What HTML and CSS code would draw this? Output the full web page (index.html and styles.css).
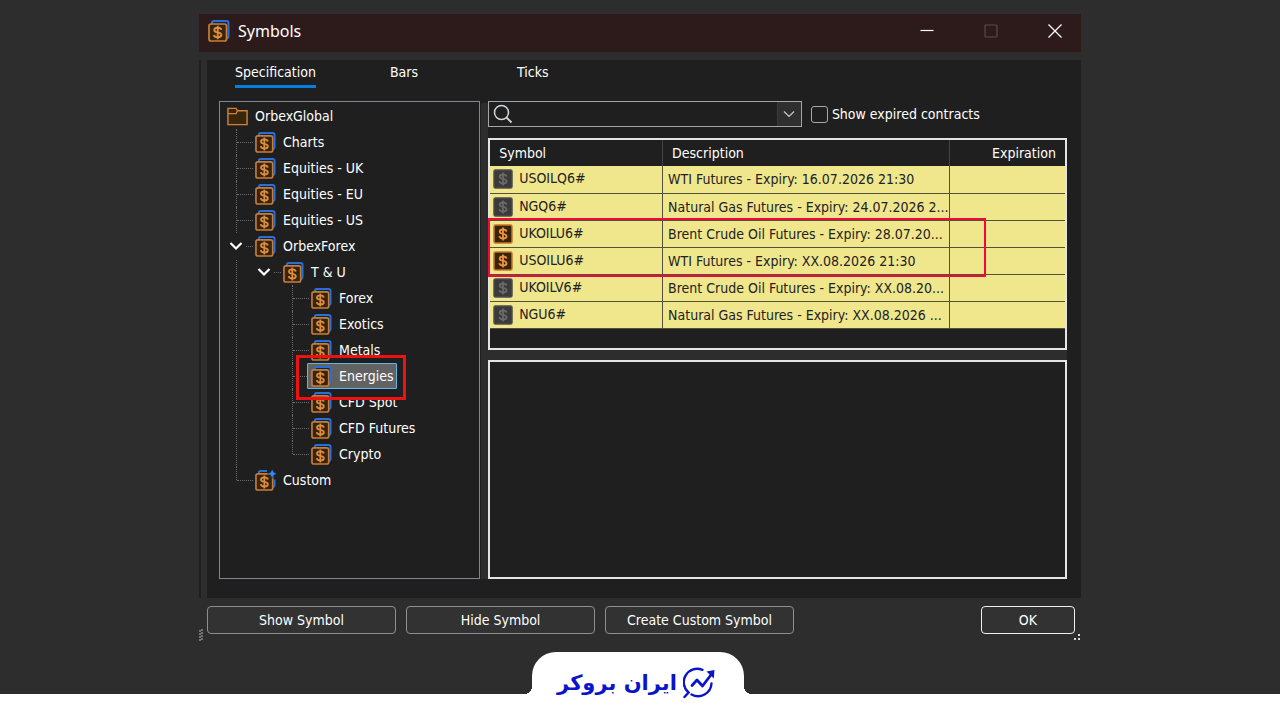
FILE: index.html
```
<!DOCTYPE html>
<html lang="en">
<head>
<meta charset="utf-8">
<title>Symbols</title>
<link rel="stylesheet" href="styles.css">
</head>
<body>
<svg class="defs" aria-hidden="true">
  <symbol id="dollar" viewBox="0 0 10 14">
    <path d="M5 .5v13M8.400 4.600C8.200 3.200 6.900 2.500 5 2.500S1.700 3.300 1.700 4.800C1.700 7.900 8.500 6 8.500 9.200C8.500 10.700 7.100 11.500 5 11.500S1.600 10.700 1.400 9.200" fill="none" stroke="currentColor" stroke-width="1.800"/>
  </symbol>
  <symbol id="stack" viewBox="0 0 22 22">
    <path d="M4 4.500V3Q4 1 6 1H18.500Q20.500 1 20.500 3V16Q20.500 18 18.500 18.500" fill="#0c2647" stroke="#2a6fd6" stroke-width="2"/>
    <rect x="1" y="4" width="17.500" height="17" rx="2" fill="#38240a" stroke="#c87d38" stroke-width="1.700"/>
    <use href="#dollar" x="4.500" y="5" width="10.500" height="15" color="#de8c40"/>
  </symbol>
  <symbol id="stack-plus" viewBox="0 0 22 22">
    <path d="M4 4V3Q4 1 6 1H12.500M20.500 10V16Q20.500 18 18.500 18.500" fill="none" stroke="#2a6fd6" stroke-width="2"/>
    <rect x="1" y="4" width="17.500" height="17" rx="2" fill="#38240a" stroke="#c87d38" stroke-width="1.700"/>
    <path d="M18 -1l1.600 3.400L23 4l-3.400 1.600L18 9l-1.600-3.400L13 4l3.400-1.600z" fill="#2f86ff" stroke="#1f1f1f" stroke-width=".5"/>
    <use href="#dollar" x="4.500" y="5" width="10.500" height="15" color="#de8c40"/>
  </symbol>
  <symbol id="folder" viewBox="0 0 22 20">
    <path d="M1 1.500H9.500L11 4H21V18.500H1zM1 7H9.500L11 4" fill="#3a260a" stroke="#cf8238" stroke-width="1.500"/>
  </symbol>
  <symbol id="tile" viewBox="0 0 20 20">
    <rect x="1" y="1" width="18" height="18" rx="1.500" fill="var(--tile)" stroke="var(--edge)" stroke-width="1.500"/>
    <use href="#dollar" x="5" y="3" width="10" height="14"/>
  </symbol>
  <symbol id="chevron" viewBox="0 0 14 10">
    <path d="M1.500 2L7 7.500L12.500 2" fill="none" stroke="currentColor" stroke-width="2.200"/>
  </symbol>
</svg>

<main class="window">
  <header class="titlebar">
    <svg class="app-icon"><use href="#stack"/></svg>
    <h1>Symbols</h1>
    <div class="window-buttons">
      <button aria-label="Minimize"><svg viewBox="0 0 16 16"><path d="M1.500 7.500H14.500" stroke="#fff" stroke-width="1.200"/></svg></button>
      <button aria-label="Maximize" disabled><svg viewBox="0 0 16 16"><rect x="2" y="2" width="12" height="12" rx="1" fill="none" stroke="#5b4a4a" stroke-width="1.200"/></svg></button>
      <button aria-label="Close"><svg viewBox="0 0 16 16"><path d="M1.500 1.500L14.500 14.500M14.500 1.500L1.500 14.500" stroke="#fff" stroke-width="1.300"/></svg></button>
    </div>
  </header>

  <section class="pane-row">
    <div class="edge"></div>
    <div class="pane">
      <nav class="tabs">
        <button class="tab active">Specification</button>
        <button class="tab bars">Bars</button>
        <button class="tab">Ticks</button>
      </nav>
      <div class="content">
        <div class="tree">
          <div class="item root"><svg><use href="#folder"/></svg><span>OrbexGlobal</span></div>
          <ul>
            <li><div class="item"><svg><use href="#stack"/></svg><span>Charts</span></div></li>
            <li><div class="item"><svg><use href="#stack"/></svg><span>Equities - UK</span></div></li>
            <li><div class="item"><svg><use href="#stack"/></svg><span>Equities - EU</span></div></li>
            <li><div class="item"><svg><use href="#stack"/></svg><span>Equities - US</span></div></li>
            <li><button class="toggle" aria-label="Collapse OrbexForex"><svg><use href="#chevron"/></svg></button>
              <div class="item"><svg><use href="#stack"/></svg><span>OrbexForex</span></div>
              <ul>
                <li><button class="toggle" aria-label="Collapse T &amp; U"><svg><use href="#chevron"/></svg></button>
                  <div class="item"><svg><use href="#stack"/></svg><span>T &amp; U</span></div>
                  <ul>
                    <li><div class="item"><svg><use href="#stack"/></svg><span>Forex</span></div></li>
                    <li><div class="item"><svg><use href="#stack"/></svg><span>Exotics</span></div></li>
                    <li><div class="item"><svg><use href="#stack"/></svg><span>Metals</span></div></li>
                    <li><div class="item selected"><svg><use href="#stack"/></svg><span>Energies</span><i class="marker"></i></div></li>
                    <li><div class="item"><svg><use href="#stack"/></svg><span>CFD Spot</span></div></li>
                    <li><div class="item"><svg><use href="#stack"/></svg><span>CFD Futures</span></div></li>
                    <li><div class="item"><svg><use href="#stack"/></svg><span>Crypto</span></div></li>
                  </ul>
                </li>
              </ul>
            </li>
            <li><div class="item"><svg><use href="#stack-plus"/></svg><span>Custom</span></div></li>
          </ul>
        </div>

        <div class="splitter"></div>

        <div class="details">
          <div class="filter">
            <div class="combo">
              <svg class="lens" viewBox="0 0 20 20"><circle cx="8.500" cy="8.500" r="7" fill="none" stroke="#d2d6da" stroke-width="1.500"/><path d="M13.500 13.500L18.500 18.500" stroke="#d2d6da" stroke-width="1.800"/></svg>
              <input type="text" aria-label="Search symbols">
              <button aria-label="Search history"><svg viewBox="0 0 12 8"><path d="M1 1.500L6 6.500L11 1.500" fill="none" stroke="#c8c8c8" stroke-width="1.200"/></svg></button>
            </div>
            <label class="check"><input type="checkbox">Show expired contracts</label>
          </div>

          <div class="grid">
            <table>
              <thead><tr><th class="c1">Symbol</th><th class="c2">Description</th><th class="c3">Expiration</th></tr></thead>
              <tbody>
                <tr><td><svg><use href="#tile"/></svg>USOILQ6#</td><td>WTI Futures - Expiry: 16.07.2026 21:30</td><td></td></tr>
                <tr><td><svg><use href="#tile"/></svg>NGQ6#</td><td>Natural Gas Futures - Expiry: 24.07.2026 2...</td><td></td></tr>
                <tr class="shown"><td><svg><use href="#tile"/></svg>UKOILU6#</td><td>Brent Crude Oil Futures - Expiry: 28.07.20...</td><td></td></tr>
                <tr class="shown"><td><svg><use href="#tile"/></svg>USOILU6#</td><td>WTI Futures - Expiry: XX.08.2026 21:30</td><td></td></tr>
                <tr><td><svg><use href="#tile"/></svg>UKOILV6#</td><td>Brent Crude Oil Futures - Expiry: XX.08.20...</td><td></td></tr>
                <tr><td><svg><use href="#tile"/></svg>NGU6#</td><td>Natural Gas Futures - Expiry: XX.08.2026 ...</td><td></td></tr>
              </tbody>
            </table>
            <i class="row-marker"></i>
          </div>
          <div class="gap-bar"></div>
          <div class="info"></div>
        </div>
      </div>
    </div>
  </section>

  <footer class="actions">
    <button>Show Symbol</button>
    <button>Hide Symbol</button>
    <button>Create Custom Symbol</button>
    <button class="ok">OK</button>
    <svg class="grip grip-left" viewBox="0 0 4 12"><path d="M1 1v11M3 0v11" stroke="#bbb" stroke-width="1" stroke-dasharray="2 1"/></svg>
    <svg class="grip grip-right" viewBox="0 0 8 8"><path d="M5 1h2v2H5zM5 5h2v2H5zM1 5h2v2H1z" fill="#ddd"/></svg>
  </footer>
</main>

<footer class="brand">
  <div class="brand-tab">
    <svg viewBox="0 0 32 32"><g fill="none" stroke="#0a14c8" stroke-width="2.400" stroke-linecap="round"><path d="M19.500 2.800A13.500 13.500 0 0 0 5.500 25.500L1.500 30M8.500 27.500A13.500 13.500 0 0 0 28.500 16.500"/><path d="M9 18.500L14 13L19.500 19L29 6.500" stroke-width="2.800" stroke-linejoin="round"/></g><path d="M23.500 4.500L31.500 3L30.800 11.500z" fill="#0a14c8"/></svg>
    <span class="brand-name" lang="fa" dir="rtl">ایران بروکر</span>
  </div>
</footer>
</body>
</html>
```
FILE: styles.css
```
* { box-sizing: border-box; }
body {
  margin: 0;
  min-height: 100vh;
  display: flex;
  flex-direction: column;
  background: #2d2d2d;
  color: #fff;
  font: 14px/18px "DejaVu Sans Condensed", "Noto Sans", sans-serif;
}
button, input { font: inherit; color: inherit; }
button { background: none; border: 0; padding: 0; }
.defs { position: absolute; width: 0; height: 0; }

.window {
  width: 68.900%;
  flex: 1;
  margin: 14px auto 11px;
  display: flex;
  flex-direction: column;
}
.titlebar {
  height: 38px;
  display: flex;
  align-items: center;
  padding: 0 18px 4px 9px;
  background: #2d1b1b;
}
.app-icon { width: 22px; height: 22px; }
h1 {
  margin: 0 0 0 8px;
  font: 16px/24px "Noto Sans", sans-serif;
}
.window-buttons { margin-left: auto; display: flex; gap: 48px; }
.window-buttons button { width: 16px; height: 16px; }
.window-buttons svg { display: block; width: 16px; height: 16px; }

.pane-row { flex: 1; display: flex; gap: 6px; margin-top: 8px; }
.edge { width: 2px; background: #1f1f1f; }
.pane {
  flex: 1;
  display: flex;
  flex-direction: column;
  padding: 0 14px 19px 12px;
  background: #1f1f1f;
}
.tabs { display: flex; align-items: flex-start; height: 41px; padding: 3px 16px 0; }
.tab { height: 25px; padding-bottom: 4px; border-bottom: 3px solid transparent; }
.tab.active { border-color: #0a7ee0; }
.tab.bars { margin: 0 99px 0 74px; }
.content { flex: 1; display: flex; }

.tree {
  flex: 0 0 30.800%;
  padding: 1px 7px;
  border: 1px solid #85858c;
}
.tree ul { list-style: none; margin: 0; padding: 0; }
.tree li { position: relative; padding-left: 28px; }
.tree li::before {
  content: "";
  position: absolute;
  left: 9px;
  top: 0;
  bottom: 0;
  border-left: 1px dotted #6a6a6a;
}
.tree li:last-child::before { bottom: auto; height: 13px; }
.tree li::after {
  content: "";
  position: absolute;
  left: 10px;
  top: 13px;
  width: 16px;
  border-top: 1px dotted #6a6a6a;
}
.item {
  position: relative;
  display: flex;
  align-items: center;
  gap: 7px;
  width: max-content;
  height: 26px;
  margin-left: -4px;
  padding: 0 3px;
  border: 1px solid transparent;
}
.item svg { width: 21px; height: 21px; }
.item.selected { z-index: 1; background: #626262; border-color: #5cb8ea; border-radius: 1px; }
.marker {
  position: absolute;
  inset: -9px -10px -12px -12px;
  border: 3px solid #ee1111;
}
.toggle {
  position: absolute;
  z-index: 1;
  left: 0;
  top: 0;
  display: flex;
  align-items: center;
  justify-content: center;
  width: 18px;
  height: 26px;
  background: #1f1f1f;
}
.toggle svg { width: 14px; height: 10px; }

.splitter { width: 8px; margin-top: 2px; background: linear-gradient(to right, #1f1f1f 1px, #2d2d2d 1px); }
.details { flex: 1; display: flex; flex-direction: column; background: #1f1f1f; }
.filter { display: flex; align-items: center; gap: 9px; margin-bottom: 11px; }
.combo {
  flex: 0 0 54.200%;
  display: flex;
  height: 26px;
  border: 1px solid #a5a5a5;
}
.lens { flex: none; width: 20px; height: 20px; margin: 2px 0 0 4px; }
.combo input { flex: 1; min-width: 0; border: 0; outline: 0; background: transparent; }
.combo button { width: 24px; background: #2f2f2f; border-left: 1px solid #3a3a3a; }
.combo button svg { display: block; width: 12px; height: 8px; margin: 0 auto; }
.check { display: flex; align-items: center; gap: 4px; }
.check input {
  appearance: none;
  width: 17px;
  height: 17px;
  margin: 0;
  border: 1px solid #a8a8a8;
  border-radius: 3px;
}

.grid { position: relative; height: 212px; border: 2px solid #e4e4e6; }
table { width: 100%; table-layout: fixed; border-collapse: collapse; }
th { height: 26px; padding: 0 9px; font-weight: normal; text-align: left; }
th + th { border-left: 1px solid #444; }
.c1 { width: 30%; }
.c2 { width: 50%; }
.c3 { text-align: right; }
td {
  height: 27px;
  padding: 0 5px;
  background: #f0e68c;
  color: #222;
  border-bottom: 1px solid #55523c;
  white-space: nowrap;
}
td + td { border-left: 1px solid #55523c; }
td:first-child { padding-left: 3px; }
td svg {
  --tile: #3a3a3a;
  --edge: #4c4c4c;
  color: #696969;
  width: 20px;
  height: 20px;
  margin-right: 6px;
  vertical-align: middle;
}
.shown svg { --tile: #38240a; --edge: #c87528; color: #ed9140; }
.row-marker {
  position: absolute;
  left: -2px;
  top: 78px;
  width: 86.600%;
  height: 59px;
  border: 2px solid #f2083f;
}
.gap-bar { height: 10px; background: #2d2d2d; }
.info { flex: 1; border: 2px solid #e4e4e6; }

.actions {
  position: relative;
  display: flex;
  gap: 10px;
  padding: 8px 6px 7px 8px;
}
.actions button {
  flex: 0 1 189px;
  height: 28px;
  background: #323232;
  border: 1px solid #8e8e8e;
  border-radius: 4px;
}
.actions .ok { flex-basis: 94px; margin-left: auto; border-color: #f0f0f0; }
.grip { position: absolute; }
.grip-left { left: 0; bottom: 0; width: 4px; height: 12px; }
.grip-right { right: 0; bottom: 0; width: 8px; height: 8px; }

.brand { display: flex; justify-content: center; padding-bottom: 26px; background: linear-gradient(to top, #fff 26px, transparent 26px); }
.brand-tab {
  position: relative;
  display: flex;
  flex-direction: row-reverse;
  align-items: center;
  justify-content: center;
  gap: 6px;
  width: 212px;
  height: 42px;
  padding: 20px 4px 0 0;
  margin-right: 4px;
  background: #fff;
  border-radius: 24px 24px 0 0;
}
.brand-tab::before, .brand-tab::after {
  content: "";
  position: absolute;
  bottom: 0;
  width: 8px;
  height: 8px;
}
.brand-tab::before { right: 100%; background: radial-gradient(circle at 0 0, transparent 8px, #fff 8px); }
.brand-tab::after { left: 100%; background: radial-gradient(circle at 100% 0, transparent 8px, #fff 8px); }
.brand-name { color: #0a14c8; font: bold 21px/32px "DejaVu Sans", sans-serif; white-space: nowrap; }
.brand-tab svg { flex: none; width: 32px; height: 32px; }
```
